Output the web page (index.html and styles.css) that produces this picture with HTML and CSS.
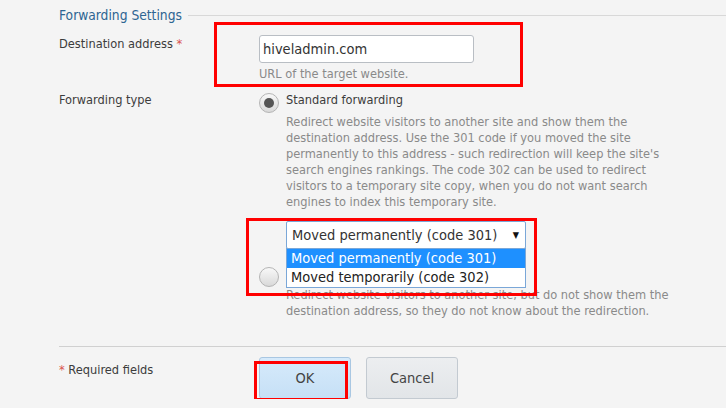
FILE: index.html
```html
<!DOCTYPE html>
<html lang="en">
<head>
  <meta charset="UTF-8" />
  <title>Forwarding Settings</title>
  <link rel="stylesheet" href="styles.css">
</head>
<body>
  <div class="page">
    <div class="legend"><span>Forwarding Settings</span></div>

    <div class="row row-dest">
      <div class="label">Destination address <span class="req">*</span></div>
      <div class="field">
        <input type="text" class="text" value="hiveladmin.com" />
        <div class="hint">URL of the target website.</div>
        <div class="mark mark-dest"></div>
      </div>
    </div>

    <div class="row row-type">
      <div class="label">Forwarding type</div>
      <div class="field">
        <div class="option">
          <span class="radio checked"></span>
          <div class="option-body">
            <div class="option-title">Standard forwarding</div>
            <div class="hint">Redirect website visitors to another site and show them the destination address. Use the 301 code if you moved the site permanently to this address - such redirection will keep the site's search engines rankings. The code 302 can be used to redirect visitors to a temporary site copy, when you do not want search engines to index this temporary site.</div>
            <div class="select-wrap">
              <div class="select">Moved permanently (code 301)<span class="caret">&#9660;</span></div>
              <ul class="dropdown">
                <li class="active">Moved permanently (code 301)</li>
                <li>Moved temporarily (code 302)</li>
              </ul>
              <div class="mark mark-select"></div>
            </div>
          </div>
        </div>
        <div class="option option-frame">
          <span class="radio"></span>
          <div class="option-body">
            <div class="option-title">Frame forwarding</div>
            <div class="hint">Redirect website visitors to another site, but do not show them the destination address, so they do not know about the redirection.</div>
          </div>
        </div>
      </div>
    </div>

    <div class="footer">
      <div class="label"><span class="req">*</span> Required fields</div>
      <div class="buttons">
        <button class="btn btn-ok">OK<span class="mark mark-ok"></span></button>
        <button class="btn">Cancel</button>
      </div>
    </div>
  </div>
</body>
</html>
```

FILE: styles.css
```css
* {
  box-sizing: border-box;
}

body {
  margin: 0;
  background: #f4f4f4;
  font-family: "DejaVu Sans Condensed", "DejaVu Sans", sans-serif;
  font-size: 12.7px;
  color: #444;
}

.page {
  padding: 6px 0 0 59px;
}

.legend {
  display: flex;
  align-items: center;
  font-size: 13.7px;
  line-height: 18px;
  color: #2e6592;
}

.legend::after {
  content: "";
  flex: 1;
  margin-left: 6px;
  border-top: 1px solid #d8d8d8;
}

.row {
  display: flex;
}

.label {
  width: 200px;
  flex-shrink: 0;
  line-height: 18px;
  color: #3c3c3c;
}

.req {
  color: #d9534f;
}

.field {
  position: relative;
  width: 420px;
}

.row-dest {
  margin-top: 11px;
}

.text {
  display: block;
  width: 215px;
  height: 28px;
  margin: 0;
  padding: 0 3px;
  border: 1px solid #b9bec4;
  border-radius: 3px;
  background: #fff;
  font-family: inherit;
  font-size: 14.5px;
  color: #333;
}

.hint {
  margin-top: 3px;
  line-height: 16px;
  color: #8a8a8a;
}

.row-type {
  margin-top: 10px;
}

.row-type .label {
  line-height: 16px;
}

.option {
  display: flex;
}

.radio {
  width: 20px;
  height: 20px;
  margin: 1px 7px 0 0;
  flex-shrink: 0;
  border: 1px solid #b4b4b4;
  border-radius: 50%;
  background: linear-gradient(#f8f8f8, #d9d9d9);
  display: flex;
  align-items: center;
  justify-content: center;
}

.radio.checked::after {
  content: "";
  width: 10px;
  height: 10px;
  border-radius: 50%;
  background: #555;
}

.option-body {
  width: 400px;
}

.option-title {
  line-height: 16px;
  color: #3c3c3c;
}

.option-body .hint {
  margin-top: 6px;
}

.select-wrap {
  position: relative;
  margin-top: 11px;
  width: 240px;
}

.select {
  height: 28px;
  padding: 0 6px 0 5px;
  border: 1px solid #7aa7d8;
  border-radius: 2px;
  background: #fff;
  display: flex;
  align-items: center;
  justify-content: space-between;
  font-size: 14.5px;
  color: #333;
}

.caret {
  font-size: 9px;
  color: #111;
}

.dropdown {
  position: absolute;
  top: 27px;
  left: 0;
  right: 0;
  margin: 0;
  padding: 0;
  list-style: none;
  background: #fff;
  border: 1px solid #7aa7d8;
  font-size: 14.5px;
  z-index: 2;
}

.dropdown li {
  height: 19px;
  line-height: 19px;
  padding-left: 4px;
  color: #222;
}

.dropdown li.active {
  background: #1e90ff;
  color: #fff;
}

.option-frame {
  margin-top: 16px;
}

.option-frame .radio {
  margin-top: 2px;
}

.footer {
  display: flex;
  margin-top: 27px;
  padding-top: 10px;
  border-top: 1px solid #d0d0d0;
}

.footer .label {
  padding-top: 4px;
}

.buttons {
  display: flex;
  gap: 15px;
}

.btn {
  position: relative;
  width: 92px;
  height: 42px;
  border: 1px solid #c3cad1;
  border-radius: 3px;
  background: linear-gradient(#eceef0, #e2e5e8);
  font-family: inherit;
  font-size: 14.5px;
  color: #444;
}

.btn-ok {
  background: linear-gradient(#d6eafb, #c6e0f6);
  border-color: #a9c7e2;
}

.mark {
  position: absolute;
  border: 3px solid #f00;
  pointer-events: none;
  z-index: 3;
}

.mark-dest {
  left: -45px;
  top: -13px;
  width: 309px;
  height: 65px;
}

.mark-select {
  left: -40px;
  top: -3px;
  width: 291px;
  height: 78px;
}

.mark-ok {
  left: -6px;
  top: 3px;
  width: 94px;
  height: 40px;
}
```
